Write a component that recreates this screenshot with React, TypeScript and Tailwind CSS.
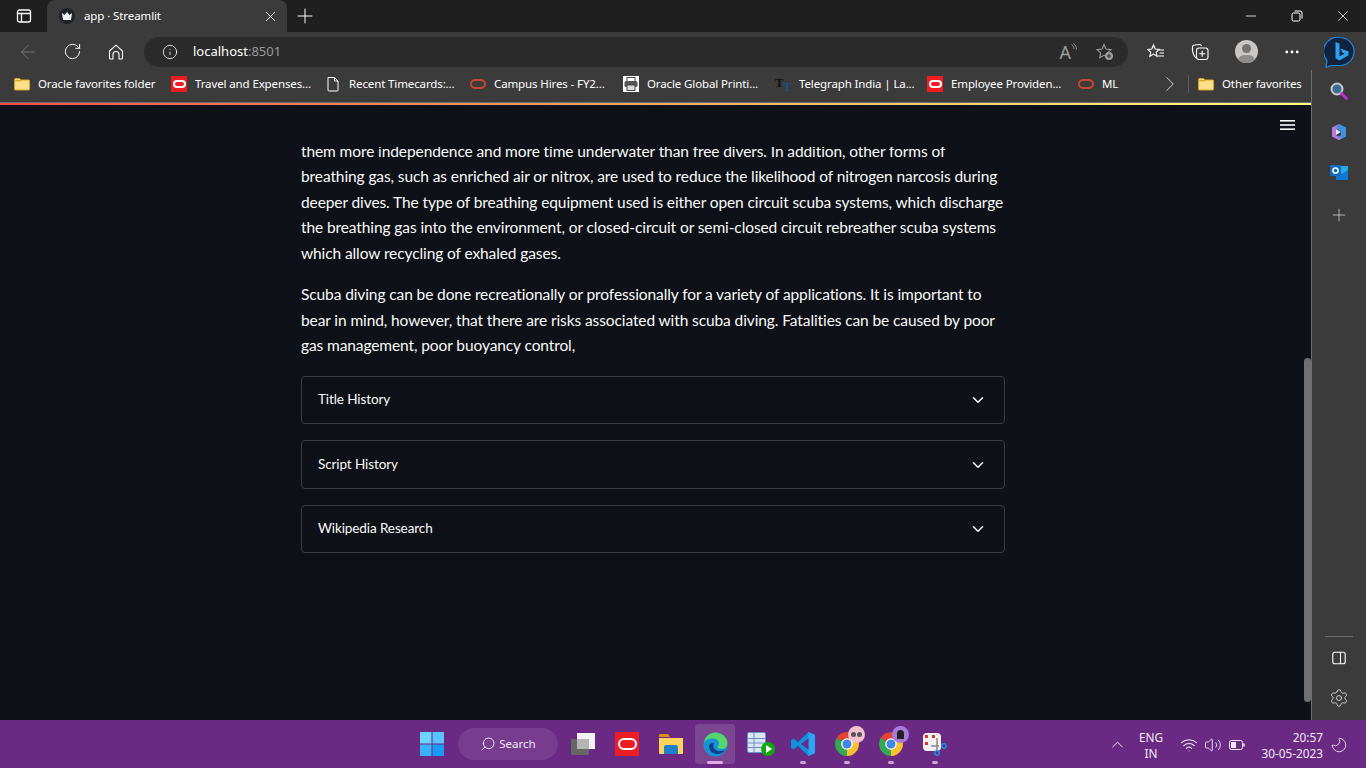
import { ChevronDown, ChevronRight, ChevronUp, Plus, X, Minus, RotateCw, Info, Settings, Wifi, Volume2, MoreHorizontal, Moon, ArrowLeft, Search } from "lucide-react";
import type { ReactNode } from "react";

const uiFont = "font-['Noto_Sans',sans-serif]";

function OracleBadge() {
  return (
    <span className="flex h-4 w-4 shrink-0 items-center justify-center bg-[#ee1c25]">
      <span className="h-[8px] w-[13px] rounded-full border-2 border-white" />
    </span>
  );
}

function OracleOval() {
  return <span className="h-[10px] w-4 shrink-0 rounded-full border-2 border-[#c74634]" />;
}

function FolderIcon({ size = 16 }: { size?: number }) {
  return (
    <svg width={size} height={size} viewBox="0 0 16 16" className="shrink-0">
      <path d="M0.5 3.5a1 1 0 0 1 1-1h4l1.5 1.5h7.5a1 1 0 0 1 1 1v8a1 1 0 0 1-1 1h-13a1 1 0 0 1-1-1z" fill="#ffe08a" stroke="#d9a520" />
      <path d="M0.5 5.5h6l1-1.5H1z" fill="#e0ac2c" />
    </svg>
  );
}

function PageIcon() {
  return (
    <svg width="16" height="16" viewBox="0 0 16 16" fill="none" stroke="#fff" strokeWidth="1" className="-ml-[1px] shrink-0">
      <path d="M3 1.500h6.500l3.500 3.500v9a1 1 0 0 1-1 1H4a1 1 0 0 1-1-1z" />
      <path d="M9.500 1.500V5H13" />
    </svg>
  );
}

function PrinterIcon() {
  return (
    <span className="flex h-4 w-4 shrink-0 items-center justify-center bg-white">
      <svg width="14" height="14" viewBox="0 0 14 14">
        <rect x="3" y="0.5" width="8" height="4" fill="#fff" stroke="#444" />
        <rect x="0.5" y="4" width="13" height="6" rx="1.5" fill="#555" />
        <rect x="3" y="8" width="8" height="5.5" fill="#ddd" stroke="#444" />
      </svg>
    </span>
  );
}

function TelegraphIcon() {
  return (
    <span className="relative h-4 w-4 shrink-0 font-['Liberation_Serif',serif] text-[13px] font-bold leading-none">
      <span className="absolute left-0 top-0 text-[#111]">T</span>
      <span className="absolute left-[8px] top-[4px] text-[#1d4f87]">T</span>
    </span>
  );
}

type Bookmark = { label: string; icon: ReactNode; width: string };

const bookmarks: Bookmark[] = [
  { label: "Oracle favorites folder", icon: <FolderIcon />, width: "w-[157px]" },
  { label: "Travel and Expenses...", icon: <OracleBadge />, width: "w-[155px]" },
  { label: "Recent Timecards:...", icon: <PageIcon />, width: "w-[144px]" },
  { label: "Campus Hires - FY2...", icon: <OracleOval />, width: "w-[153px]" },
  { label: "Oracle Global Printi...", icon: <PrinterIcon />, width: "w-[152px]" },
  { label: "Telegraph India | La...", icon: <TelegraphIcon />, width: "w-[152px]" },
  { label: "Employee Providen...", icon: <OracleBadge />, width: "w-[151px]" },
  { label: "ML", icon: <OracleOval />, width: "w-[79px]" },
];

function BookmarksBar() {
  return (
    <div className={`flex h-[34px] shrink-0 items-center bg-[#3b3b3b] pb-[2px] pl-[14px] text-[11.5px] tracking-[-0.12px] text-white ${uiFont}`}>
      {bookmarks.map((b) => (
        <div key={b.label} className={`flex items-center gap-2 ${b.width}`}>
          {b.icon}
          <span className="whitespace-nowrap">{b.label}</span>
        </div>
      ))}
      <ChevronRight size={26} strokeWidth={0.9} className="text-[#d0d0d0]" />
      <div className="ml-[5px] mr-[9px] h-[18px] w-px bg-[#5e5e5e]" />
      <div className="flex items-center gap-2">
        <FolderIcon />
        <span className="whitespace-nowrap">Other favorites</span>
      </div>
    </div>
  );
}

function TabStrip() {
  return (
    <div className={`flex h-[32px] shrink-0 items-center bg-[#1f1f1f] text-white ${uiFont}`}>
      <div className="flex w-[47px] justify-center">
        <svg width="16" height="16" viewBox="0 0 16 16" fill="none" stroke="#fff" strokeWidth="1.3">
          <rect x="1.5" y="2" width="13" height="12" rx="2" />
          <path d="M1.5 5.5h13M5.5 5.5V14" />
        </svg>
      </div>
      <div className="flex h-full w-[240px] items-center rounded-t-lg bg-[#3b3b3b] pl-[12px] pr-[8px]">
        <span className="flex h-4 w-4 items-center justify-center rounded-full bg-[#20222c]">
          <svg width="10" height="8" viewBox="0 0 10 8">
            <path d="M0 1l2.5 2L5 0l2.5 3L10 1 9 8H1z" fill="#f2f2f2" />
          </svg>
        </span>
        <span className="ml-[9px] flex-1 text-[11.5px] tracking-[-0.1px]">app · Streamlit</span>
        <X size={17} strokeWidth={1.4} />
      </div>
      <div className="flex w-[36px] justify-center">
        <Plus size={24} strokeWidth={1} />
      </div>
      <div className="ml-auto flex items-center">
        <div className="flex w-[46px] justify-center"><Minus size={16} strokeWidth={1.2} /></div>
        <div className="flex w-[46px] justify-center">
          <svg width="12" height="12" viewBox="0 0 12 12" fill="none" stroke="#fff" strokeWidth="1">
            <rect x="1" y="3" width="8" height="8" rx="1.5" />
            <path d="M3.5 1h5.5a2 2 0 0 1 2 2v5.5" />
          </svg>
        </div>
        <div className="flex w-[46px] justify-center"><X size={18} strokeWidth={1} /></div>
      </div>
    </div>
  );
}

function BingIcon() {
  return (
    <svg width="32" height="32" viewBox="0 0 32 32">
      <path d="M16 1.5a14 14 0 0 1 0 28H7l-5 2 1-7A14 14 0 0 1 16 1.5z" fill="#12233f" stroke="#1b8ce0" strokeWidth="1.2" />
      <path d="M11.5 6l4 1.4v13l5-2.9-2.4-1.2-1.6-3.8 8 2.9v3.8l-9 5.3-4-2.3z" fill="#2ba3ee" />
    </svg>
  );
}

function Toolbar() {
  return (
    <div className={`flex h-[36px] shrink-0 items-center bg-[#3b3b3b] pl-[6px] pt-[3px] text-white ${uiFont}`}>
      <div className="flex w-[44px] justify-center"><ArrowLeft size={22} strokeWidth={1} className="text-[#7d7d7d]" /></div>
      <div className="flex w-[44px] justify-center"><RotateCw size={19} strokeWidth={1.2} /></div>
      <div className="flex w-[44px] justify-center">
        <svg width="16" height="16" viewBox="0 0 16 16" fill="none" stroke="#fff" strokeWidth="1.1">
          <path d="M1.500 7L8 1.200 14.500 7v7a1 1 0 0 1-1 1H11V10.500a3 3 0 0 0-6 0V15H2.500a1 1 0 0 1-1-1z" />
        </svg>
      </div>
      <div className="ml-[6px] flex h-[30px] w-[984px] items-center rounded-full bg-[#2b2b2b] pl-[18px]">
        <Info size={16} strokeWidth={1.2} />
        <span className="ml-[15px] text-[13px]">
          localhost<span className="text-[#9a9a9a]">:8501</span>
        </span>
        <div className="ml-auto flex items-center gap-[19px] pr-[14px] text-[#9c9c9c]">
          <span className="flex items-start">
            <span className="text-[18px] leading-none">A</span>
            <svg width="6" height="10" viewBox="0 0 6 10" fill="none" stroke="#9c9c9c" strokeWidth="0.9">
              <path d="M0.500 1.500C2 2.500 3 4 3 6M2.500 0.500C4.500 2 5.500 4 5.500 6.500" />
            </svg>
          </span>
          <svg width="18" height="18" viewBox="0 0 18 18" fill="none" stroke="#9c9c9c" strokeWidth="1.1">
            <path d="M8 1.5l2 4.6 5 .5-3.7 3.3 1 4.8L8 12.3l-4.3 2.4 1-4.8L1 6.6l5-.5z" />
            <circle cx="13" cy="13" r="4" fill="#9c9c9c" stroke="none" />
            <path d="M13 11v4M11 13h4" stroke="#2b2b2b" />
          </svg>
        </div>
      </div>
      <div className="ml-[6px] flex w-[44px] justify-center">
        <svg width="18" height="18" viewBox="0 0 18 18" fill="none" stroke="#fff" strokeWidth="1.1">
          <path d="M6.5 2l1.7 4 4 .4-3 2.7.9 4.2-3.6-2.2-3.7 2.2.9-4.2-3-2.7 4.1-.4z" />
          <path d="M12 7h5M12.5 10h4.5M11 13h6" />
        </svg>
      </div>
      <div className="flex w-[44px] justify-center">
        <svg width="18" height="18" viewBox="0 0 18 18" fill="none" stroke="#fff" strokeWidth="1.1">
          <path d="M5 15C2.5 13 1 8 1.5 4a2 2 0 0 1 2-2l5-.5a2 2 0 0 1 2 1.5" />
          <rect x="5.5" y="5" width="11.5" height="11.5" rx="2.5" />
          <path d="M11.2 7.8v6M8.2 10.8h6" />
        </svg>
      </div>
      <div className="ml-[2px] flex w-[44px] justify-center">
        <span className="relative h-[23px] w-[23px] overflow-hidden rounded-full bg-[#c9c7c5]">
          <span className="absolute left-[7px] top-[4px] h-[9px] w-[9px] rounded-full bg-[#767472]" />
          <span className="absolute left-[3px] top-[15px] h-[12px] w-[17px] rounded-full bg-[#8f8d8b]" />
        </span>
      </div>
      <div className="ml-[2px] flex w-[44px] justify-center"><MoreHorizontal size={18} strokeWidth={1.8} /></div>
      <div className="ml-[4px] flex w-[44px] justify-center"><BingIcon /></div>
    </div>
  );
}

function SideBar() {
  return (
    <div className="flex w-[55px] shrink-0 flex-col bg-[#3b3b3b] pt-[2px]">
      <div className="flex flex-1 flex-col items-center border-l border-[#6e6e6e] pb-[12px] pt-[11px]">
        <svg width="20" height="20" viewBox="0 0 20 20" fill="none">
          <circle cx="8" cy="8" r="5.5" fill="#3a6f92" stroke="#c8c8c8" strokeWidth="2" />
          <path d="M12.5 12.5l5 5" stroke="#c02ce0" strokeWidth="2.6" strokeLinecap="round" />
        </svg>
        <svg width="18" height="18" viewBox="0 0 18 18" className="mt-[22px]">
          <path d="M9 1l7 3.5v9L9 17l-3-2 5-3V8L6 5.5z" fill="#3c93e2" />
          <path d="M9 1L2 4.5v9L9 17l2-1.500L6 12V6z" fill="#b77ae0" />
          <path d="M6 6l5 3-5 3z" fill="#d9e8f7" />
        </svg>
        <svg width="18" height="18" viewBox="0 0 18 18" className="mt-[21px]">
          <path d="M6 4h12v14H6z" fill="#28a8ea" />
          <path d="M18 8l-6 4-6-4v10h12z" fill="#0a78d4" />
          <rect x="0" y="3" width="11" height="11" rx="1" fill="#0f6cbd" />
          <circle cx="5.5" cy="8.5" r="2.6" fill="none" stroke="#fff" strokeWidth="1.5" />
        </svg>
        <Plus size={20} strokeWidth={0.9} className="mt-[25px] text-[#d8d8d8]" />
        <div className="mt-auto h-px w-[28px] bg-[#6e6e6e]" />
        <svg width="14" height="14" viewBox="0 0 14 14" fill="none" stroke="#fff" strokeWidth="1.1" className="mt-[14px]">
          <rect x="0.8" y="1.2" width="12.4" height="11.6" rx="2" />
          <path d="M8.5 1.2v11.6" />
        </svg>
        <Settings size={20} strokeWidth={1} className="mt-[23px] text-[#e0e0e0]" />
      </div>
    </div>
  );
}

function Expander({ title, height }: { title: string; height: string }) {
  return (
    <div className={`flex ${height} items-center justify-between rounded border border-[#3a3c43] pl-4 pr-[17px] text-[13.5px] tracking-[-0.1px] text-[#fafafa]`}>
      <span>{title}</span>
      <ChevronDown size={18} strokeWidth={2} />
    </div>
  );
}

const para1 = [
  "them more independence and more time underwater than free divers. In addition, other forms of",
  "breathing gas, such as enriched air or nitrox, are used to reduce the likelihood of nitrogen narcosis during",
  "deeper dives. The type of breathing equipment used is either open circuit scuba systems, which discharge",
  "the breathing gas into the environment, or closed-circuit or semi-closed circuit rebreather scuba systems",
  "which allow recycling of exhaled gases.",
];

const para2 = [
  "Scuba diving can be done recreationally or professionally for a variety of applications. It is important to",
  "bear in mind, however, that there are risks associated with scuba diving. Fatalities can be caused by poor",
  "gas management, poor buoyancy control,",
];

function Page() {
  return (
    <div className="flex min-h-0 flex-1 bg-[#0e1117]">
      <div className="flex min-w-0 flex-1 flex-col">
        <div className="flex h-[42px] shrink-0 items-center justify-end pb-[3px] pr-[9px] text-[#fafafa]">
          <svg width="15" height="10" viewBox="0 0 15 10" fill="#fafafa">
            <rect width="15" height="1.600" />
            <rect y="4.200" width="15" height="1.600" />
            <rect y="8.400" width="15" height="1.600" />
          </svg>
        </div>
        <div className="min-h-0 flex-1 overflow-hidden">
          <div className="ml-[301px] mt-[-8.5px] w-[704px] font-['Lato',sans-serif] text-[15.5px] leading-[25.6px] tracking-[-0.1px] text-[#fafafa]">
            <p>
              {para1.map((l) => (
                <span key={l} className="block whitespace-nowrap">{l}</span>
              ))}
            </p>
            <p className="mt-[15.5px]">
              {para2.map((l) => (
                <span key={l} className="block whitespace-nowrap">{l}</span>
              ))}
            </p>
            <div className="mt-[17.5px] flex flex-col gap-4">
              <Expander title="Title History" height="h-[48px]" />
              <Expander title="Script History" height="h-[49px]" />
              <Expander title="Wikipedia Research" height="h-[48px]" />
            </div>
          </div>
        </div>
      </div>
      <div className="flex w-[7px] shrink-0 flex-col pb-[18px] pt-[253px]">
        <div className="flex-1 rounded-full bg-[#6f7074]" />
      </div>
    </div>
  );
}

function TaskIcon({ children, active, dot }: { children: ReactNode; active?: boolean; dot?: boolean }) {
  return (
    <div className="relative flex h-[40px] w-[44px] items-center justify-center">
      <div className={`flex h-[40px] w-[40px] items-center justify-center rounded ${active ? "bg-[#7c4592]" : ""}`}>
        {children}
      </div>
      {active && <span className="absolute bottom-0 h-[3px] w-[16px] rounded-full bg-[#e6a9e9]" />}
      {dot && <span className="absolute bottom-0 h-[3px] w-[6px] rounded-full bg-[#c9a6d4]" />}
    </div>
  );
}

function ChromeIcon({ badge }: { badge: ReactNode }) {
  return (
    <span className="relative h-6 w-6">
      <svg width="24" height="24" viewBox="0 0 24 24">
        <path d="M12 12L1.610 6A12 12 0 0 1 22.390 6z" fill="#e34234" />
        <path d="M12 12L1.610 6A12 12 0 0 0 12 24z" fill="#34a853" />
        <path d="M12 12L22.390 6A12 12 0 0 1 12 24z" fill="#fbc02d" />
        <circle cx="12" cy="12" r="5.800" fill="#fff" />
        <circle cx="12" cy="12" r="4.500" fill="#3f87e6" />
      </svg>
      {badge}
    </span>
  );
}

function Taskbar() {
  return (
    <div className={`flex h-[48px] shrink-0 items-center bg-[#6a2a83] pl-[410px] text-white ${uiFont}`}>
      <TaskIcon>
        <svg width="24" height="24" viewBox="0 0 24 24">
          <path d="M0 0h11.5v11.5H0z" fill="#6fd2fb" />
          <path d="M12.5 0H24v11.5H12.5z" fill="#58c3fa" />
          <path d="M0 12.5h11.5V24H0z" fill="#3bb0f8" />
          <path d="M12.5 12.5H24V24H12.5z" fill="#1a9bf5" />
        </svg>
      </TaskIcon>
      <div className="mx-[4px] flex h-[32px] w-[100px] items-center justify-center gap-[3px] rounded-full bg-[#773c8e] text-[11.5px] text-[#f3e9f6]">
        <Search size={16} strokeWidth={1.5} className="-scale-x-100" />
        Search
      </div>
      <div className="ml-[-1px] flex">
        <TaskIcon>
          <span className="relative h-[24px] w-[24px]">
            <span className="absolute left-[6px] top-[1px] h-[16px] w-[18px] bg-[#f2f2f2]" />
            <span className="absolute bottom-[1px] left-0 h-[16px] w-[18px] bg-[#666]" />
            <span className="absolute left-[6px] top-[7px] h-[10px] w-[12px] bg-[#b4b4b4]" />
          </span>
        </TaskIcon>
        <TaskIcon>
          <span className="flex h-6 w-6 items-center justify-center bg-[#ee1c25]">
            <span className="h-[12px] w-[19px] rounded-full border-[2.5px] border-white" />
          </span>
        </TaskIcon>
        <TaskIcon>
          <svg width="24" height="24" viewBox="0 0 24 24">
            <path d="M0 3a1 1 0 0 1 1-1h8l2 3H0z" fill="#d9920f" />
            <path d="M0 6h24v15a1 1 0 0 1-1 1H1a1 1 0 0 1-1-1z" fill="#ffd35c" />
            <path d="M5 15a2 2 0 0 1 2-2h10a2 2 0 0 1 2 2v7H5z" fill="#1f7fc7" />
          </svg>
        </TaskIcon>
        <TaskIcon active>
          <svg width="25" height="25" viewBox="0 0 25 25">
            <circle cx="12.5" cy="12.5" r="12" fill="#1692d8" />
            <path d="M1 11C2 4 7 .5 12.5.5c6.5 0 12 5 12 11 0 3.500-3 5.500-6 5.500-2.500 0-4-1-4-2 0-1 1.500-1 1.500-3.500 0-3-3-5-6-5C5 6.500 2 8.500 1 11z" fill="#54d66a" />
            <path d="M6 14c0 5 4 8 8 8 3 0 6-1 8-4-3 1.500-7 1.500-9.500 0C10 16.500 9.500 13 11 11 8 10.500 6 12 6 14z" fill="#0a3f8a" />
          </svg>
        </TaskIcon>
        <TaskIcon dot={false}>
          <span className="relative h-6 w-6">
            <svg width="20" height="22" viewBox="0 0 20 22">
              <rect x="0.5" y="0.5" width="18" height="20" rx="1.5" fill="#dbe6f5" stroke="#6a8fc9" />
              <path d="M0.5 6.500h18M0.5 11h18M0.5 15.500h18M7 0.500v20" stroke="#6a8fc9" />
            </svg>
            <span className="absolute bottom-0 right-[-4px] flex h-[14px] w-[14px] items-center justify-center rounded-full bg-[#11a90f]">
              <span className="ml-[2px] h-0 w-0 border-y-[4px] border-l-[6px] border-y-transparent border-l-white" />
            </span>
          </span>
        </TaskIcon>
        <TaskIcon dot>
          <svg width="24" height="24" viewBox="0 0 24 24">
            <path d="M17.500 0L24 3v18l-6.500 3L7 14l-4.500 3.500L0 16V8l2.500-1.500L7 10z" fill="#0f8fdc" />
            <path d="M17.500 0L24 3v18l-6.500 3z" fill="#2aa7f0" />
            <path d="M17.500 6.500v11L10 12z" fill="#6a2a83" />
          </svg>
        </TaskIcon>
        <TaskIcon dot>
          <ChromeIcon
            badge={
              <span className="absolute right-[-6px] top-[-6px] flex h-[17px] w-[17px] items-center justify-center gap-[1px] rounded-full bg-[#f7c0cf]">
                <span className="h-[5px] w-[5px] rounded-full bg-[#555]" />
                <span className="h-[5px] w-[5px] rounded-full bg-[#555]" />
              </span>
            }
          />
        </TaskIcon>
        <TaskIcon dot>
          <ChromeIcon
            badge={
              <span className="absolute right-[-6px] top-[-6px] flex h-[17px] w-[17px] items-center justify-center rounded-full bg-[#a77bdc]">
                <span className="h-[9px] w-[7px] rounded-t-full bg-[#222]" />
              </span>
            }
          />
        </TaskIcon>
        <TaskIcon dot>
          <span className="relative h-6 w-6">
            <span className="absolute left-0 top-[1px] h-[18px] w-[18px] rounded-sm bg-[#f1f1f1]" />
            <span className="absolute left-[2px] top-[3px] h-[10px] w-[10px] border-l-[3px] border-t-[3px] border-dotted border-[#d8352a]" />
            <svg width="24" height="24" viewBox="0 0 24 24" className="absolute left-0 top-0">
              <path d="M8 14l8 0M14 6v12" stroke="#888" strokeWidth="1.5" />
              <circle cx="21" cy="14" r="2.200" fill="none" stroke="#1e8fe0" strokeWidth="1.500" />
              <circle cx="14" cy="21" r="2.200" fill="none" stroke="#1e8fe0" strokeWidth="1.500" />
            </svg>
          </span>
        </TaskIcon>
      </div>
      <div className="ml-auto flex items-center pr-[17px] pt-[1px] text-[11.8px] text-[#f3e9f6]">
        <div className="flex w-[24px] justify-center"><ChevronUp size={19} strokeWidth={1.2} /></div>
        <div className="w-[44px] text-center leading-[16px]">ENG<br />IN</div>
        <div className="ml-[4px] flex w-[24px] justify-center"><Wifi size={18} strokeWidth={1.4} /></div>
        <div className="flex w-[24px] justify-center"><Volume2 size={18} strokeWidth={1.2} /></div>
        <div className="flex w-[24px] justify-center">
          <svg width="16" height="10" viewBox="0 0 16 10" fill="none" stroke="#f3e9f6">
            <rect x="0.500" y="0.500" width="13" height="9" rx="2" />
            <rect x="2" y="2" width="5" height="6" fill="#f3e9f6" stroke="none" />
            <path d="M15 3.500v3" strokeWidth="1.500" />
          </svg>
        </div>
        <div className="w-[74px] text-right leading-[16px]">20:57<br />30-05-2023</div>
        <div className="ml-[6px] flex w-[20px] justify-center"><Moon size={18} strokeWidth={1.1} className="-scale-x-100" /></div>
      </div>
    </div>
  );
}

export default function App() {
  return (
    <div className="flex h-screen w-full flex-col overflow-hidden bg-[#0e1117]">
      <TabStrip />
      <Toolbar />
      <div className="flex min-h-0 flex-1">
        <div className="flex min-w-0 flex-1 flex-col">
          <BookmarksBar />
          <div className="h-px shrink-0 bg-[#6b6b6b]" />
          <div className="h-[2px] shrink-0 bg-gradient-to-r from-[#ff4b4b] to-[#fffd80]" />
          <Page />
        </div>
        <SideBar />
      </div>
      <Taskbar />
    </div>
  );
}
